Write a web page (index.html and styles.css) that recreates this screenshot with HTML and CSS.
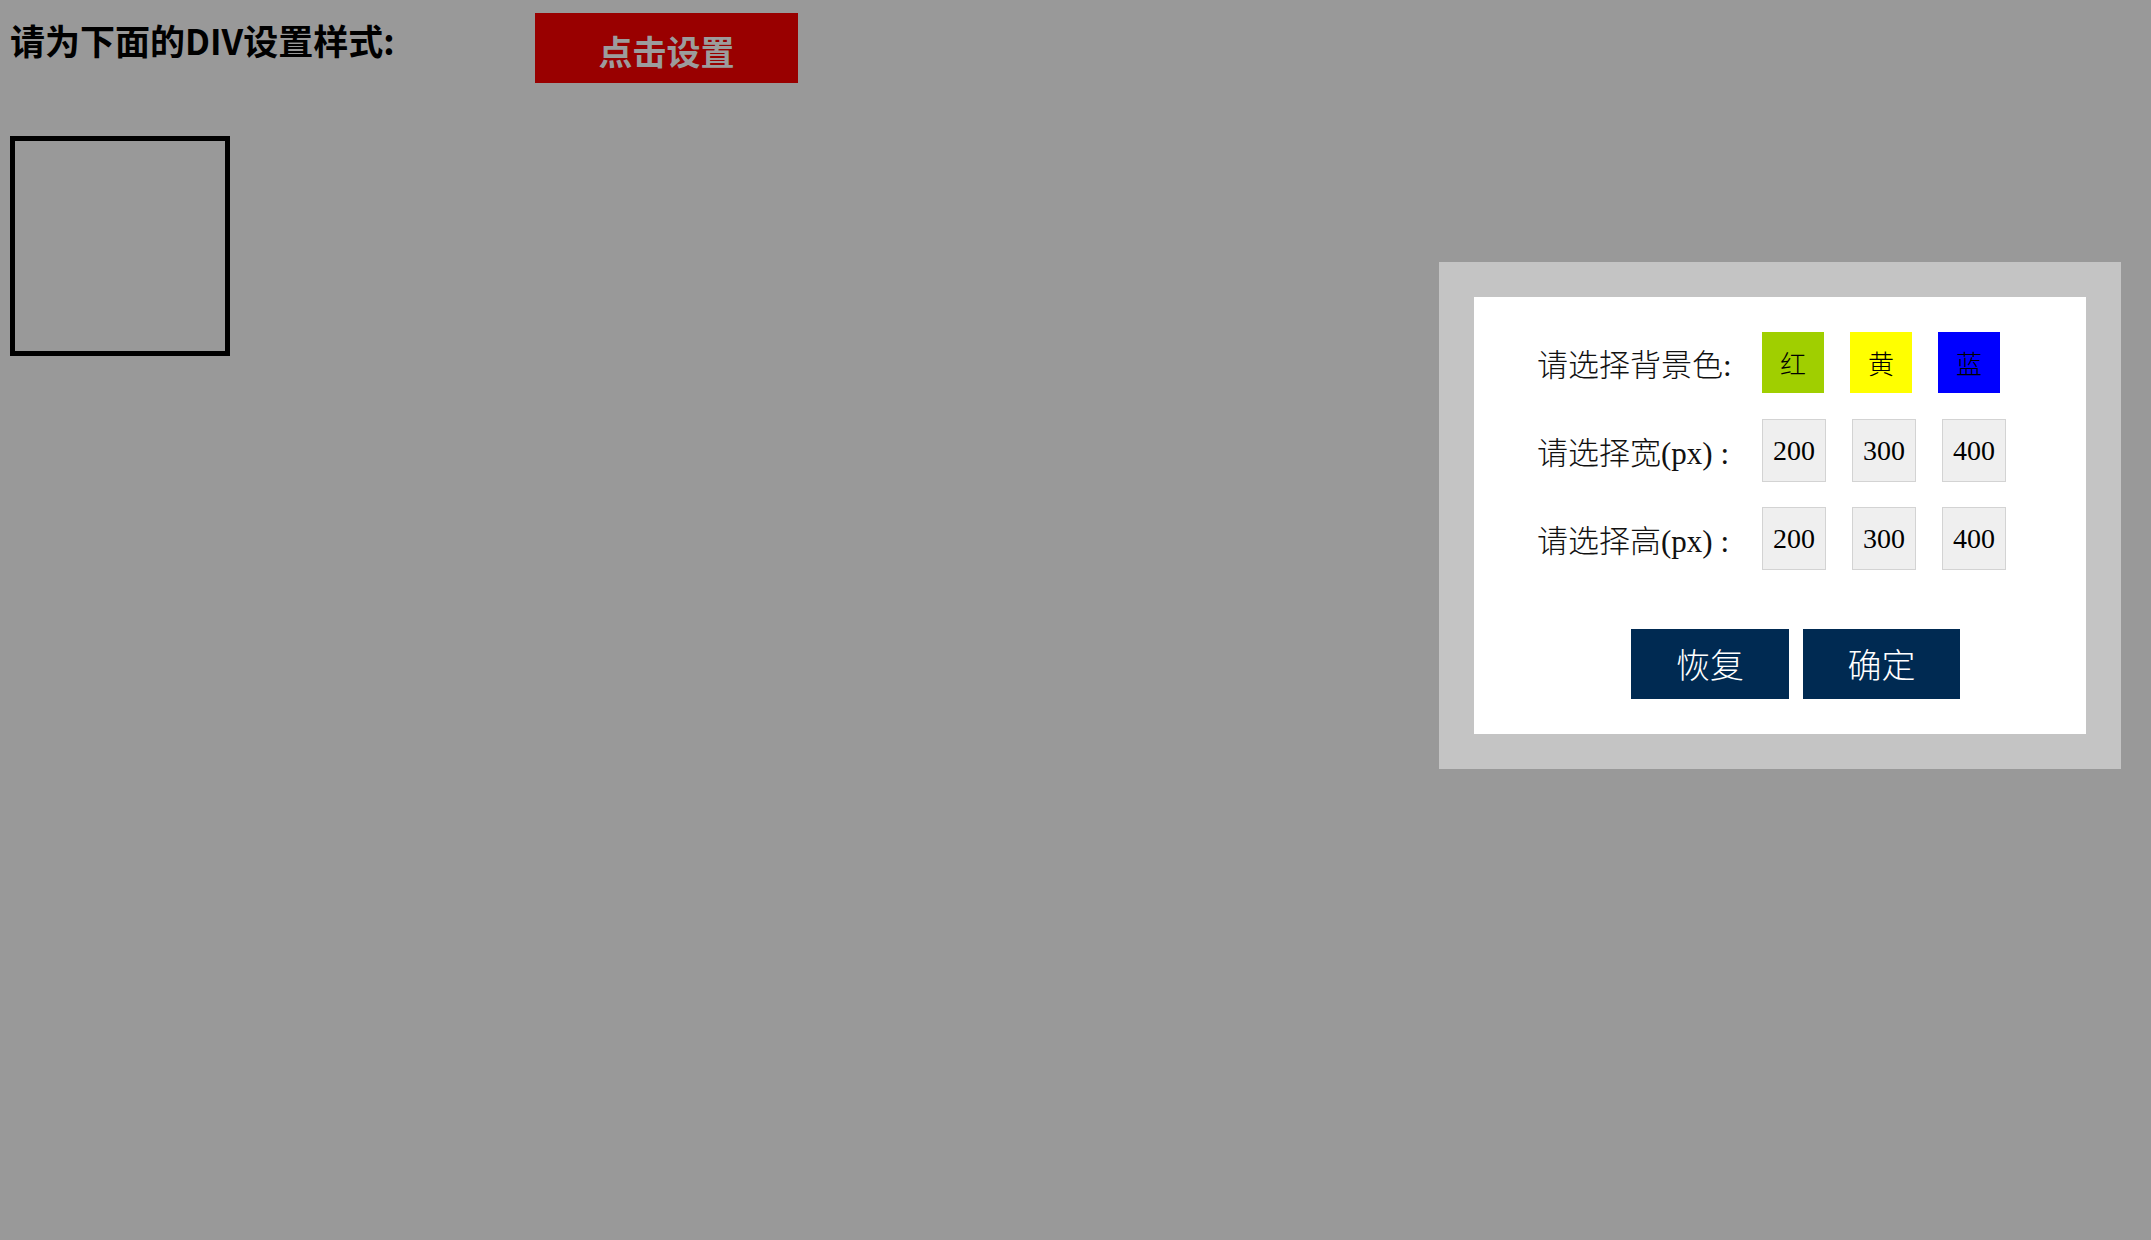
FILE: index.html
```html
<!DOCTYPE html>
<html lang="zh-CN">
<head>
<meta charset="utf-8">
<title>DIV设置样式</title>
<link rel="stylesheet" href="styles.css">
</head>
<body>
<div class="page">
  <div class="header">
    <h2 class="title">请为下面的DIV设置样式:</h2>
    <button class="set-btn" type="button">点击设置</button>
  </div>
  <div class="target"></div>
</div>

<div class="dialog">
  <div class="dialog-inner">
    <div class="row">
      <span class="label">请选择背景色:</span>
      <div class="opts">
        <span class="swatch swatch-green">红</span>
        <span class="swatch swatch-yellow">黄</span>
        <span class="swatch swatch-blue">蓝</span>
      </div>
    </div>
    <div class="row row-num">
      <span class="label">请选择宽(px) :</span>
      <div class="opts">
        <span class="num">200</span>
        <span class="num">300</span>
        <span class="num">400</span>
      </div>
    </div>
    <div class="row row-num">
      <span class="label">请选择高(px) :</span>
      <div class="opts">
        <span class="num">200</span>
        <span class="num">300</span>
        <span class="num">400</span>
      </div>
    </div>
    <div class="actions">
      <button class="act" type="button">恢复</button>
      <button class="act" type="button">确定</button>
    </div>
  </div>
</div>
</body>
</html>
```

FILE: styles.css
```css
html, body {
  margin: 0;
  padding: 0;
  background: #999999;
}

body {
  width: 2151px;
  height: 1240px;
  position: relative;
  overflow: hidden;
  font-family: "Liberation Serif", "Noto Sans CJK SC", serif;
}

.page {
  padding: 13px 0 0 10px;
}

.header {
  display: flex;
  align-items: flex-start;
}

.title {
  margin: 9px 0 0 0;
  width: 525px;
  font-family: "Noto Sans CJK SC", sans-serif;
  font-weight: 700;
  font-size: 35px;
  line-height: 36px;
  color: #000;
  letter-spacing: 0;
}

.set-btn {
  width: 263px;
  height: 70px;
  margin: 0;
  padding: 6px 0 0 0;
  border: none;
  background: #990000;
  color: #9c9c9c;
  font-family: "Noto Sans CJK SC", sans-serif;
  font-weight: 700;
  font-size: 34px;
  line-height: 1;
  display: flex;
  align-items: center;
  justify-content: center;
}

.target {
  margin-top: 53px;
  width: 210px;
  height: 210px;
  border: 5px solid #000;
}

.dialog {
  position: absolute;
  left: 1439px;
  top: 262px;
  width: 612px;
  padding: 35px;
  background: #c4c4c4;
}

.dialog-inner {
  background: #ffffff;
  height: 437px;
  box-sizing: border-box;
  padding: 35px 0 35px 63px;
}

.row {
  display: flex;
  align-items: center;
  height: 61px;
}

.row-num {
  height: 63px;
  margin-top: 26px;
}

.row-num + .row-num {
  margin-top: 25px;
}

.label {
  width: 225px;
  font-family: "Liberation Serif", "Noto Sans CJK SC", serif;
  font-weight: 300;
  font-size: 31px;
  line-height: 1;
  color: #111;
  padding-top: 6px;
  white-space: pre;
}

.opts {
  display: flex;
  gap: 26px;
}

.swatch {
  width: 62px;
  height: 61px;
  display: flex;
  align-items: center;
  justify-content: center;
  font-family: "Noto Sans CJK SC", serif;
  font-weight: 300;
  font-size: 26px;
  color: #000;
}

.swatch-green { background: #a0cf00; }
.swatch-yellow { background: #ffff00; }
.swatch-blue { background: #0000ff; }

.num {
  width: 62px;
  height: 61px;
  border: 1px solid #d3d3d3;
  background: #efefef;
  display: flex;
  align-items: center;
  justify-content: center;
  font-family: "Liberation Serif", serif;
  font-size: 28px;
  color: #000;
}

.actions {
  display: flex;
  gap: 14px;
  margin: 59px 0 0 94px;
}

.act {
  width: 158px;
  height: 70px;
  margin: 0;
  padding: 0;
  border: none;
  background: #002a52;
  color: #fff;
  font-family: "Noto Sans CJK SC", serif;
  font-weight: 300;
  font-size: 34px;
  line-height: 1;
  display: flex;
  align-items: center;
  justify-content: center;
}

.act + .act {
  width: 157px;
}
```
